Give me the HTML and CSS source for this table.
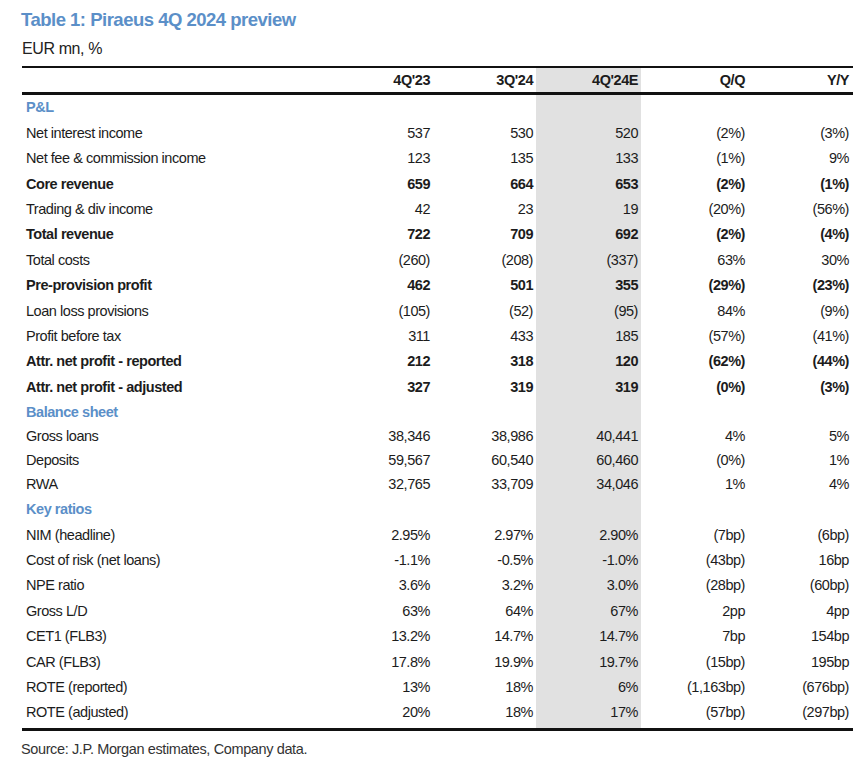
FILE: index.html
```html
<!DOCTYPE html>
<html lang="en">
<head>
<meta charset="utf-8">
<title>Table 1: Piraeus 4Q 2024 preview</title>
<link rel="stylesheet" href="styles.css">
</head>
<body>
<div class="page">
  <h1 class="title">Table 1: Piraeus 4Q 2024 preview</h1>
  <div class="unit">EUR mn, %</div>
  <table class="data">
    <colgroup>
      <col class="c-label"><col class="c-num"><col class="c-num2"><col class="c-num"><col class="c-num3"><col class="c-num">
    </colgroup>
    <thead>
      <tr><th class="lbl"></th><th>4Q'23</th><th>3Q'24</th><th class="est">4Q'24E</th><th>Q/Q</th><th class="last">Y/Y</th></tr>
    </thead>
    <tbody>
      <tr class="sec"><td class="lbl">P&amp;L</td><td></td><td></td><td class="est"></td><td></td><td class="last"></td></tr>
      <tr><td class="lbl">Net interest income</td><td>537</td><td>530</td><td class="est">520</td><td>(2%)</td><td class="last">(3%)</td></tr>
      <tr><td class="lbl">Net fee &amp; commission income</td><td>123</td><td>135</td><td class="est">133</td><td>(1%)</td><td class="last">9%</td></tr>
      <tr class="bold"><td class="lbl">Core revenue</td><td>659</td><td>664</td><td class="est">653</td><td>(2%)</td><td class="last">(1%)</td></tr>
      <tr><td class="lbl">Trading &amp; div income</td><td>42</td><td>23</td><td class="est">19</td><td>(20%)</td><td class="last">(56%)</td></tr>
      <tr class="bold"><td class="lbl">Total revenue</td><td>722</td><td>709</td><td class="est">692</td><td>(2%)</td><td class="last">(4%)</td></tr>
      <tr><td class="lbl">Total costs</td><td>(260)</td><td>(208)</td><td class="est">(337)</td><td>63%</td><td class="last">30%</td></tr>
      <tr class="bold"><td class="lbl">Pre-provision profit</td><td>462</td><td>501</td><td class="est">355</td><td>(29%)</td><td class="last">(23%)</td></tr>
      <tr><td class="lbl">Loan loss provisions</td><td>(105)</td><td>(52)</td><td class="est">(95)</td><td>84%</td><td class="last">(9%)</td></tr>
      <tr><td class="lbl">Profit before tax</td><td>311</td><td>433</td><td class="est">185</td><td>(57%)</td><td class="last">(41%)</td></tr>
      <tr class="bold"><td class="lbl">Attr. net profit - reported</td><td>212</td><td>318</td><td class="est">120</td><td>(62%)</td><td class="last">(44%)</td></tr>
      <tr class="bold"><td class="lbl">Attr. net profit - adjusted</td><td>327</td><td>319</td><td class="est">319</td><td>(0%)</td><td class="last">(3%)</td></tr>
      <tr class="sec short"><td class="lbl">Balance sheet</td><td></td><td></td><td class="est"></td><td></td><td class="last"></td></tr>
      <tr class="short"><td class="lbl">Gross loans</td><td>38,346</td><td>38,986</td><td class="est">40,441</td><td>4%</td><td class="last">5%</td></tr>
      <tr class="short"><td class="lbl">Deposits</td><td>59,567</td><td>60,540</td><td class="est">60,460</td><td>(0%)</td><td class="last">1%</td></tr>
      <tr class="short"><td class="lbl">RWA</td><td>32,765</td><td>33,709</td><td class="est">34,046</td><td>1%</td><td class="last">4%</td></tr>
      <tr class="sec"><td class="lbl">Key ratios</td><td></td><td></td><td class="est"></td><td></td><td class="last"></td></tr>
      <tr><td class="lbl">NIM (headline)</td><td>2.95%</td><td>2.97%</td><td class="est">2.90%</td><td>(7bp)</td><td class="last">(6bp)</td></tr>
      <tr><td class="lbl">Cost of risk (net loans)</td><td>-1.1%</td><td>-0.5%</td><td class="est">-1.0%</td><td>(43bp)</td><td class="last">16bp</td></tr>
      <tr><td class="lbl">NPE ratio</td><td>3.6%</td><td>3.2%</td><td class="est">3.0%</td><td>(28bp)</td><td class="last">(60bp)</td></tr>
      <tr><td class="lbl">Gross L/D</td><td>63%</td><td>64%</td><td class="est">67%</td><td>2pp</td><td class="last">4pp</td></tr>
      <tr><td class="lbl">CET1 (FLB3)</td><td>13.2%</td><td>14.7%</td><td class="est">14.7%</td><td>7bp</td><td class="last">154bp</td></tr>
      <tr><td class="lbl">CAR (FLB3)</td><td>17.8%</td><td>19.9%</td><td class="est">19.7%</td><td>(15bp)</td><td class="last">195bp</td></tr>
      <tr><td class="lbl">ROTE (reported)</td><td>13%</td><td>18%</td><td class="est">6%</td><td>(1,163bp)</td><td class="last">(676bp)</td></tr>
      <tr class="end"><td class="lbl">ROTE (adjusted)</td><td>20%</td><td>18%</td><td class="est">17%</td><td>(57bp)</td><td class="last">(297bp)</td></tr>
    </tbody>
  </table>
  <p class="source">Source: J.P. Morgan estimates, Company data.</p>
</div>
</body>
</html>
```
FILE: styles.css
```css
html, body {
  margin: 0;
  padding: 0;
  background: #ffffff;
}

body {
  font-family: "Liberation Sans", Arial, sans-serif;
  color: #1c1c1c;
}

.page {
  padding: 7px 10px 0 22px;
}

.title {
  margin: 0 0 0 -1px;
  font-size: 18.5px;
  letter-spacing: -0.5px;
  line-height: 25px;
  font-weight: bold;
  color: #5b8fc8;
}

.unit {
  margin-top: 6px;
  font-size: 16px;
  letter-spacing: -0.4px;
  line-height: 22px;
  color: #222222;
}

.data {
  margin-top: 6px;
  width: 831px;
  table-layout: fixed;
  border-collapse: separate;
  border-spacing: 0;
  font-size: 14.5px;
  letter-spacing: -0.45px;
}

.c-label { width: 306px; }
.c-num { width: 105px; }
.c-num2 { width: 103px; }
.c-num3 { width: 107px; }

.data th,
.data td {
  padding: 0 3px 0 0;
  text-align: right;
  white-space: nowrap;
  vertical-align: middle;
}

.data th {
  font-weight: bold;
  border-top: 2px solid #111111;
  border-bottom: 3px solid #111111;
  box-sizing: border-box;
  line-height: 1;
  padding-top: 1px;
}

.data thead th {
  height: 29px;
}

.data td {
  height: 25.4px;
  line-height: 1;
}

.data .lbl {
  text-align: left;
  padding-left: 4px;
}

.data .last {
  padding-right: 4px;
}

.data .est {
  background: #e1e1e1;
}

.data .bold td {
  font-weight: bold;
}

.data .sec .lbl {
  font-weight: bold;
  color: #5b8fc8;
}

.data .short td {
  height: 24.3px;
}

.data .end td {
  height: 31px;
  border-bottom: 3px solid #111111;
  box-sizing: border-box;
  padding-bottom: 4px;
}

.source {
  margin: 9px 0 0 -1px;
  font-size: 14.5px;
  letter-spacing: -0.38px;
  line-height: 18px;
  color: #333333;
}
```
